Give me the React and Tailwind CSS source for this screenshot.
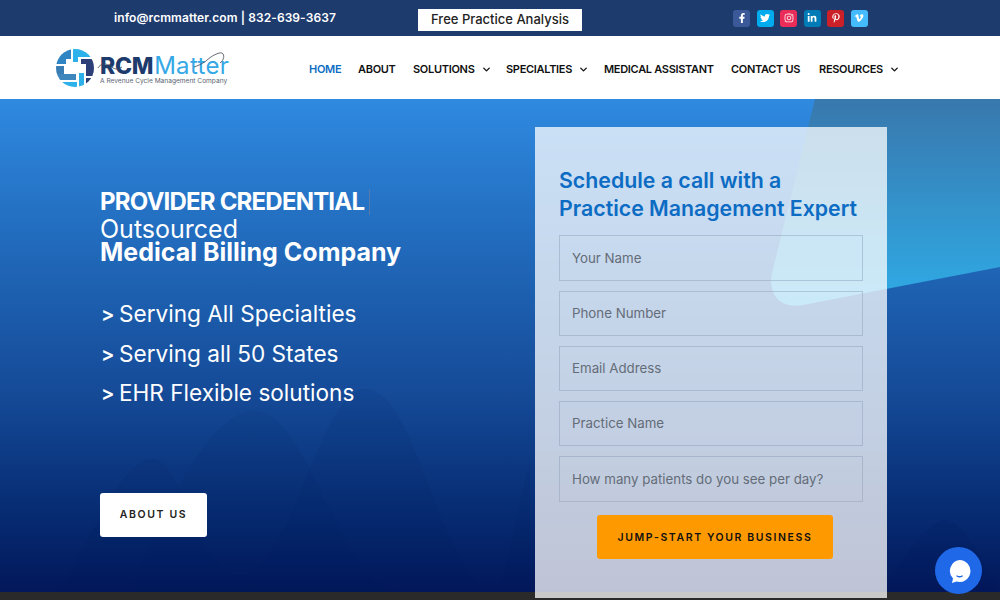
import React from 'react';
import { ChevronDown } from 'lucide-react';
import { FaFacebookF, FaTwitter, FaInstagram, FaLinkedinIn, FaPinterestP, FaVimeoV } from 'react-icons/fa';

const SOCIALS = [
  { icon: FaFacebookF, bg: 'bg-[#3b5998]' },
  { icon: FaTwitter, bg: 'bg-[#00acee]' },
  { icon: FaInstagram, bg: 'bg-[#ea2c59]' },
  { icon: FaLinkedinIn, bg: 'bg-[#007bb6]' },
  { icon: FaPinterestP, bg: 'bg-[#cb2027]' },
  { icon: FaVimeoV, bg: 'bg-[#45bbff]' },
];

const MENU = [
  { label: 'HOME', active: true, w: 'w-[49px]' },
  { label: 'ABOUT', w: 'w-[55px]' },
  { label: 'SOLUTIONS', caret: true, w: 'w-[93px]' },
  { label: 'SPECIALTIES', caret: true, w: 'w-[98px]' },
  { label: 'MEDICAL ASSISTANT', w: 'w-[127px]' },
  { label: 'CONTACT US', w: 'w-[88px]' },
  { label: 'RESOURCES', caret: true, w: 'w-[80px]' },
];

const FIELDS = [
  { label: 'Your Name', h: 'h-[46px]' },
  { label: 'Phone Number', h: 'h-[45px]' },
  { label: 'Email Address', h: 'h-[45px]' },
  { label: 'Practice Name', h: 'h-[45px]' },
  { label: 'How many patients do you see per day?', h: 'h-[46px]' },
];

const POINTS = ['Serving All Specialties', 'Serving all 50 States', 'EHR Flexible solutions'];

function Logo() {
  return (
    <div className="flex items-center">
      <svg width="38" height="38" viewBox="0 0 38 38" className="shrink-0 mt-[1px]">
        <defs>
          <clipPath id="disc"><circle cx="19" cy="19" r="19" /></clipPath>
        </defs>
        <g clipPath="url(#disc)">
          <path d="M0 0H15V10H10V15H0Z" fill="#2f84c4" />
          <path d="M17 0H38V8H22V13H17Z" fill="#2db1ea" />
          <path d="M25 10H38V27H30V15H25Z" fill="#2c3f78" />
          <path d="M0 17H8V25H0Z" fill="#3a7db5" />
          <path d="M0 25H20V31H0Z" fill="#3f86bd" />
          <path d="M0 33H21V38H0Z" fill="#2db1ea" />
          <path d="M23 24H28V38H23Z" fill="#2db1ea" />
          <path d="M30 29H38V38H30Z" fill="#2c3f78" />
        </g>
      </svg>
      <div className="relative ml-[6px] mt-[6px] flex flex-col">
        <div className="flex items-baseline text-[23px] leading-[20px]">
          <span className="font-extrabold text-[#1d3b6d] tracking-[-0.3px]">RCM</span>
          <span className="ml-[1px] text-[24px] font-normal text-[#35a8e6] tracking-[0.3px]">Matter</span>
        </div>
        <span className="mt-[2px] text-[6.6px] leading-[7px] text-[#5b6472] whitespace-nowrap">A Revenue Cycle Management Company</span>
        <svg className="absolute left-[-3px] top-[-9px]" width="132" height="30" viewBox="0 0 132 30" fill="none" stroke="#3d4654" strokeWidth="0.8">
          <path d="M1 21c2-4 8-6 14-1 3 3 7 2 10 0M109 14c5-5 13-9 16-8 3 2 2 7-2 10M109 14c-4 3-9 5-12 6" />
        </svg>
      </div>
    </div>
  );
}

function ChatIcon() {
  return (
    <svg width="24" height="24" viewBox="0 0 24 24">
      <path d="M12.5 1a11 11 0 1 1-3 21.6L5 24l1-4.5A11 11 0 0 1 12.5 1z" fill="#fff" />
      <path d="M10 17c1.6 1 3.6 1 5.2 0" stroke="#1f69e8" strokeWidth="1.4" fill="none" strokeLinecap="round" />
    </svg>
  );
}

export default function App() {
  return (
    <div className="w-[1000px] h-[600px] overflow-hidden bg-[#2a2a2a] font-[Inter,sans-serif]">
      {/* top bar */}
      <div className="h-9 bg-[#1d3b6d] flex items-center">
        <div className="w-[417px] pl-[114px] text-white text-[12px] font-semibold whitespace-nowrap pb-[1px] tracking-[0.08px]">
          info@rcmmatter.com | 832-639-3637
        </div>
        <div className="self-start mt-2 w-[166px] h-6 bg-white border border-[#1d3b6d] flex items-center justify-center text-[13px] text-[#222] font-medium">
          Free Practice Analysis
        </div>
        <div className="flex gap-[6.5px] ml-[150px]">
          {SOCIALS.map(({ icon: Icon, bg }, i) => (
            <div key={i} className={`w-[17px] h-[17px] rounded-[3px] flex items-center justify-center text-white text-[10px] ${bg}`}>
              <Icon />
            </div>
          ))}
        </div>
      </div>

      {/* nav */}
      <div className="h-[63px] bg-white flex items-center pl-[56px]">
        <div className="w-[253px]"><Logo /></div>
        <div className="flex items-center pt-[3px]">
          {MENU.map(m => (
            <div key={m.label} className={`flex items-center text-[11px] tracking-[-0.3px] font-semibold whitespace-nowrap ${m.w} ${m.active ? 'text-[#0c6cc4]' : 'text-[#111]'}`}>
              {m.label}
              {m.caret && <ChevronDown className="ml-[6px] shrink-0" size={11} strokeWidth={3} />}
            </div>
          ))}
        </div>
      </div>

      {/* hero */}
      <div className="relative h-[493px] bg-gradient-to-b from-[#2f8ae0] via-[#154a97] via-60% to-[#03175a] flex pl-[100px]">
        <svg className="absolute inset-0" width="1000" height="493" viewBox="0 0 1000 493">
          <defs>
            <linearGradient id="shape" x1="0" y1="0" x2="0" y2="1">
              <stop offset="0" stopColor="#3878ad" />
              <stop offset="1" stopColor="#2fabe6" />
            </linearGradient>
          </defs>
          <path d="M60 493C100 420 125 360 152 360C185 360 195 477 241 477C290 477 320 290 365 290C420 290 440 493 500 493L530 361V493Z" fill="#03175a" opacity="0.08" />
          <path d="M130 493C170 400 210 312 255 312C310 312 340 493 400 493Z" fill="#03175a" opacity="0.07" />
          <path d="M880 493C910 450 930 421 945 421C965 421 985 470 1000 493Z" fill="#03175a" opacity="0.1" />
          <path d="M815 0L773 170C766 195 780 210 803 206L1000 168V0Z" fill="url(#shape)" />
        </svg>

        {/* left column */}
        <div className="relative w-[435px] text-white">
          <div className="mt-[90px] flex items-center h-[26px]">
            <h2 className="text-[24px] leading-[26px] font-bold tracking-[-0.8px] whitespace-nowrap">PROVIDER CREDENTIAL</h2>
            <span className="w-px h-[26px] ml-[5px] bg-[#5a7aa8]" />
          </div>
          <div className="mt-[2px] text-[25px] leading-[24px] font-normal">Outsourced</div>
          <div className="text-[25px] leading-[23px] font-bold whitespace-nowrap">Medical Billing Company</div>
          <div className="mt-[35px] flex flex-col gap-[9px]">
            {POINTS.map(p => (
              <div key={p} className="flex text-[22.6px] leading-[30.5px] font-normal whitespace-nowrap">
                <span className="w-[19px] text-[20px] font-semibold pl-[1px]">&gt;</span>{p}
              </div>
            ))}
          </div>
          <div className="mt-[84px] pt-[1px] w-[107px] h-11 bg-white rounded-[3px] flex items-center justify-center text-[#222] text-[10.5px] font-semibold tracking-[1.6px]">
            ABOUT US
          </div>
        </div>

        {/* form */}
        <div className="relative self-start mt-7 w-[352px] h-[471px] bg-white/75 px-6 pt-[39px]">
          <h3 className="text-[21.3px] leading-[28px] font-semibold text-[#0c6cc4] whitespace-nowrap">
            Schedule a call with a<br />Practice Management Expert
          </h3>
          <div className="mt-[13px] flex flex-col gap-[10px]">
            {FIELDS.map(f => (
              <div key={f.label} className={`${f.h} border border-[#8a9bb5]/45 flex items-center pl-3 pt-[1px] text-[13.3px] text-[#646c78]`}>
                {f.label}
              </div>
            ))}
          </div>
          <div className="mt-[13px] ml-[38px] pt-[1px] w-[236px] h-11 bg-[#ff9900] rounded-[3px] flex items-center justify-center text-[#111] text-[10.5px] font-semibold tracking-[1.6px] whitespace-nowrap">
            JUMP-START YOUR BUSINESS
          </div>
        </div>

        {/* chat */}
        <div className="absolute right-[18px] bottom-[-2px] w-[47px] h-[47px] rounded-full bg-[#1f69e8] flex items-center justify-center">
          <ChatIcon />
        </div>
      </div>
    </div>
  );
}
